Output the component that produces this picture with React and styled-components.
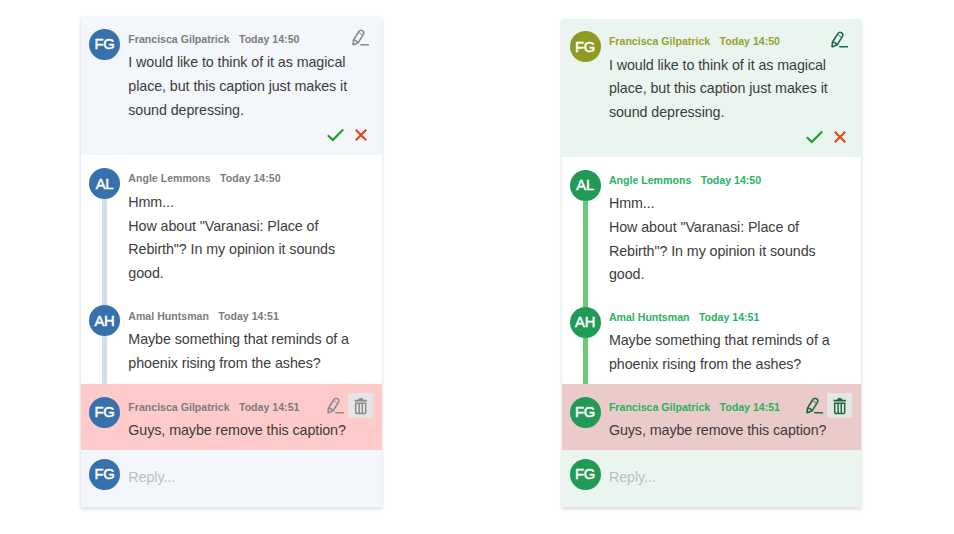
import React from "react";
import styled, { createGlobalStyle, ThemeProvider } from "styled-components";

const GlobalStyle = createGlobalStyle`
  * { box-sizing: border-box; }
  body { margin: 0; background: #fff; font-family: "Liberation Sans", Arial, sans-serif; }
`;

const blue = {
  width: "301px", line: "23.8px", inset: "8px", threadTop: "12px", lead: "0.9px",
  panel: "#f3f6fb", avatar: "#3670ad", firstAvatar: "#3670ad",
  meta: "#7d7d7d", firstMeta: "#7d7d7d", thread: "#d0dff0",
  removed: "#ffcaca", icon: "#8c8c8c",
};

const green = {
  width: "299px", line: "23.7px", inset: "7.6px", threadTop: "11px", lead: "0.6px",
  panel: "#ebf5f0", avatar: "#219a55", firstAvatar: "#8f9a22",
  meta: "#27b45f", firstMeta: "#97a22c", thread: "#68cb73",
  removed: "#ebcaca", icon: "#1d6b40",
};

const Page = styled.main`
  width: 954px;
  height: 534px;
  display: flex;
  align-items: flex-start;
  gap: 180px;
  padding: 16px 0 0 81px;
  overflow: hidden;
`;

const Card = styled.section`
  width: ${(p) => p.theme.width};
  margin-top: ${(p) => p.$offset || "0"};
  border-radius: 2px;
  background: #fff;
  box-shadow: 0 2px 3px 1px rgba(0, 0, 0, 0.11);
  overflow: hidden;
`;

const tones = {
  panel: (p) => p.theme.panel,
  removed: (p) => p.theme.removed,
  plain: () => "#fff",
};

const Comment = styled.article`
  display: grid;
  grid-template-columns: 31px 1fr;
  column-gap: 8.3px;
  height: ${(p) => p.$height};
  padding: ${(p) => p.$top || "11px"} 9px 0 ${(p) => p.theme.inset};
  background: ${(p) => tones[p.$tone]};
`;

const Rail = styled.div`
  display: flex;
  flex-direction: column;
  align-items: center;
  padding-top: 1.5px;
`;

const Avatar = styled.div`
  flex: none;
  display: flex;
  align-items: center;
  justify-content: center;
  width: 31px;
  height: 31px;
  border-radius: 50%;
  background: ${(p) => (p.$first ? p.theme.firstAvatar : p.theme.avatar)};
  color: #fff;
  font-size: 14.8px;
  letter-spacing: -0.2px;
  -webkit-text-stroke: 0.5px #fff;
`;

const Thread = styled.div`
  flex: 1;
  width: 5px;
  margin-bottom: ${(p) => p.$extend || "0"};
  background: ${(p) => p.theme.thread};
`;

const Body = styled.div`
  min-width: 0;
`;

const Header = styled.header`
  display: flex;
  align-items: center;
  height: 23.5px;
  color: ${(p) => (p.$first ? p.theme.firstMeta : p.theme.meta)};
  font-size: 10.6px;
  font-weight: 700;
  white-space: nowrap;
`;

const Time = styled.time`
  margin-left: 9.4px;
`;

const Tools = styled.div`
  display: flex;
  margin: -2.5px 0 0 auto;
`;

const Tool = styled.button`
  display: flex;
  align-items: center;
  justify-content: center;
  width: 25px;
  height: 25px;
  padding: 0;
  border: 0;
  border-radius: 2px;
  background: ${(p) => (p.$active ? "#e4e5e5" : "transparent")};
  color: ${(p) => p.theme.icon};
`;

const Text = styled.p`
  margin: 0;
  padding-top: ${(p) => p.theme.lead};
  color: #3c3c3c;
  font-size: 14.3px;
  letter-spacing: -0.08px;
  line-height: ${(p) => p.theme.line};
  white-space: pre;
`;

const Actions = styled.div`
  display: flex;
  justify-content: flex-end;
  align-items: center;
  gap: 11px;
  height: 25.2px;
  padding-right: 6.5px;
`;

const Reply = styled.div`
  display: flex;
  align-items: flex-start;
  gap: 8.3px;
  height: 57px;
  padding: 8.6px 8px 0 ${(p) => p.theme.inset};
  background: ${(p) => p.theme.panel};
`;

const Placeholder = styled.span`
  color: #bdbdbd;
  font-size: 14.3px;
  letter-spacing: -0.08px;
  line-height: 37.5px;
`;

const Pencil = () => (
  <svg width="18" height="18" viewBox="0 0 18 18" fill="none" stroke="currentColor" strokeWidth="1.6" strokeLinejoin="round">
    <path d="M1 16.1 1.4 11.2 6.9 2.5Q8.4.5 10.4 1.7Q12.6 3.1 11.5 5.2L6.2 13.8 1 16.1M1.4 11.2Q4.8 11.2 6.2 13.8" />
    <path d="M6.9 3.7 10.6 6.2" strokeWidth=".8" />
    <path d="M8.2 15.8H17" />
  </svg>
);

const Trash = () => (
  <svg width="14" height="18" viewBox="0 0 14 18" fill="none" stroke="currentColor" strokeWidth="1.5">
    <path d="M.5 3.7H12.9" strokeWidth="1.7" />
    <path d="M3.9 3.3Q4.1 .8 6.7 .8Q9.3 .8 9.5 3.3Z" fill="currentColor" stroke="none" />
    <path d="M1.7 6.3H11.7V15.6Q11.7 16.5 10.8 16.5H2.6Q1.7 16.5 1.7 15.6ZM5.1 6.3V16M8.3 6.3V16" />
  </svg>
);

const Check = () => (
  <svg width="17" height="14" viewBox="0 0 17 14" fill="none" stroke="#1c9c25" strokeWidth="2.1">
    <path d="M.9 7.2 5.8 12 16.2 1.5" />
  </svg>
);

const Cross = () => (
  <svg width="12" height="12" viewBox="0 0 12 12" fill="none" stroke="#e54318" strokeWidth="2.1">
    <path d="M.8.8 11.2 11.2M11.2.8.8 11.2" />
  </svg>
);

function Entry({ initials, name, time, text, first, tone = "plain", height, top, thread, extend, edit, remove, actions }) {
  return (
    <Comment $tone={tone} $height={height} $top={top}>
      <Rail>
        <Avatar $first={first}>{initials}</Avatar>
        {thread && <Thread $extend={extend} />}
      </Rail>
      <Body>
        <Header $first={first}>
          <span>{name}</span>
          <Time>{time}</Time>
          {edit && (
            <Tools>
              <Tool aria-label="Edit"><Pencil /></Tool>
              {remove && <Tool $active aria-label="Delete"><Trash /></Tool>}
            </Tools>
          )}
        </Header>
        <Text>{text}</Text>
        {actions && <Actions><Check /><Cross /></Actions>}
      </Body>
    </Comment>
  );
}

function Conversation({ theme, offset, heights }) {
  return (
    <ThemeProvider theme={theme}>
      <Card $offset={offset}>
        <Entry first tone="panel" height={heights[0]} initials="FG" name="Francisca Gilpatrick" time="Today 14:50"
          text={"I would like to think of it as magical\nplace, but this caption just makes it\nsound depressing."} edit actions />
        <Entry height={heights[1]} top={theme.threadTop} initials="AL" name="Angle Lemmons" time="Today 14:50" thread extend="-14px"
          text={"Hmm...\nHow about \"Varanasi: Place of\nRebirth\"? In my opinion it sounds\ngood."} />
        <Entry height={heights[2]} top="11.3px" initials="AH" name="Amal Huntsman" time="Today 14:51" thread
          text={"Maybe something that reminds of a\nphoenix rising from the ashes?"} />
        <Entry tone="removed" height={heights[3]} initials="FG" name="Francisca Gilpatrick" time="Today 14:51"
          text="Guys, maybe remove this caption?" edit remove />
        <Reply>
          <Avatar>FG</Avatar>
          <Placeholder>Reply...</Placeholder>
        </Reply>
      </Card>
    </ThemeProvider>
  );
}

export default function App() {
  return (
    <>
      <GlobalStyle />
      <Page>
        <Conversation theme={blue} heights={["138.5px", "138px", "91.5px", "66px"]} />
        <Conversation theme={green} offset="2.5px" heights={["138.5px", "137px", "90.4px", "65.6px"]} />
      </Page>
    </>
  );
}
